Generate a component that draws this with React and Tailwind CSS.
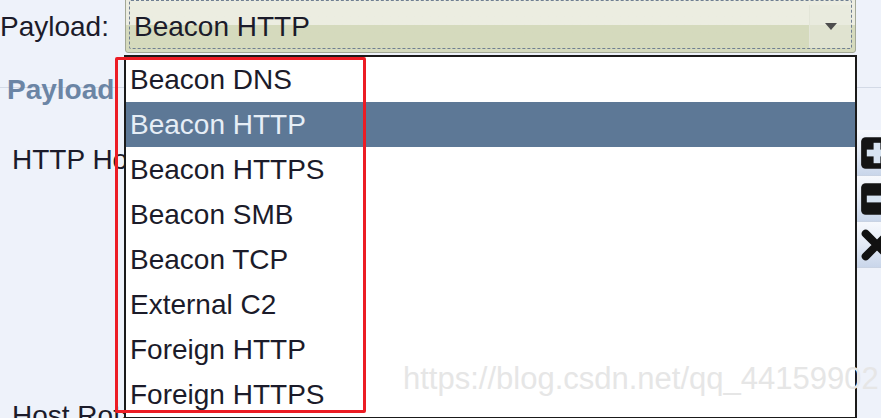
import React from "react";

const items = [
  "Beacon DNS",
  "Beacon HTTP",
  "Beacon HTTPS",
  "Beacon SMB",
  "Beacon TCP",
  "External C2",
  "Foreign HTTP",
  "Foreign HTTPS",
];

function ToolButton({ kind }) {
  return (
    <div className="flex h-[46px] shrink-0 items-center border-b border-[#c9d3e3] bg-gradient-to-b from-[#f7f9fd] via-[#e3eaf5] to-[#c9d6ea] pl-[3px]">
      <svg width="34" height="34" viewBox="0 0 30 30" className="shrink-0">
        {kind === "x" ? (
          <path d="M5 5 L25 25 M25 5 L5 25" stroke="#111" strokeWidth="7" strokeLinecap="round" />
        ) : (
          <>
            <rect x="1" y="1" width="28" height="28" rx="4" fill="#141414" />
            <rect x="6" y="12" width="18" height="6" fill="#d8e4f2" />
            {kind === "plus" && <rect x="12" y="6" width="6" height="18" fill="#d8e4f2" />}
          </>
        )}
      </svg>
    </div>
  );
}

export default function App() {
  return (
    <div
      className="relative h-[418px] w-[881px] overflow-hidden bg-[#eef2fa] text-[#1b1b2a]"
      style={{ fontFamily: '"Liberation Sans", Arial, sans-serif' }}
    >
      {/* top row */}
      <div className="flex h-[56px] items-start">
        <div className="flex h-[53px] w-[125px] items-center text-[28px] leading-none">Payload:</div>
        <div className="relative mt-[-4px] flex h-[57px] w-[731px] rounded-[3px] border border-[#a3a896] bg-gradient-to-b from-[#ecede1] from-50% to-[#d5dabd] to-50% p-[3px]">
          <div className="flex flex-1 items-center rounded-[2px] border border-dashed border-[#6f7f92] pl-[4px] pt-[4px] text-[28px] leading-none">
            Beacon HTTP
            <div className="ml-auto flex h-full w-[42px] items-center justify-center border-l border-[#e3e5d8] bg-[#e7e9dc]/60">
              <svg width="12" height="8" viewBox="0 0 12 8">
                <path d="M0 0 H12 L6 7 Z" fill="#4d4d4d" />
              </svg>
            </div>
          </div>
        </div>
      </div>

      {/* section header */}
      <div className="flex h-[32px] items-center border-b border-[#d3dae6] pl-[7px]">
        <span className="mt-[36px] text-[28px] font-bold leading-none text-[#6b85a5]">Payload</span>
      </div>

      {/* hosts row */}
      <div className="mt-[42px] flex">
        <div className="w-[125px] shrink-0 whitespace-nowrap pl-[12px] pt-[16px] text-[28px] leading-none">HTTP Hosts:</div>
        <div className="h-[260px] w-[732px] shrink-0 border border-[#333] bg-white"></div>
        <div className="flex w-[40px] shrink-0 flex-col">
          <ToolButton kind="plus" />
          <ToolButton kind="minus" />
          <ToolButton kind="x" />
        </div>
      </div>

      <div className="absolute left-[12px] top-[402px] text-[28px] leading-none">Host Rotation</div>

      {/* dropdown popup */}
      <div className="absolute left-[124px] top-[55px] w-[733px] border-2 border-[#1a1a1a] bg-white">
        {items.map((item) => (
          <div
            key={item}
            className={
              item === "Beacon HTTP"
                ? "flex h-[45px] items-center bg-[#5d7896] pl-[4px] text-[28px] leading-none text-[#e6eef6]"
                : "flex h-[45px] items-center pl-[4px] text-[28px] leading-none"
            }
          >
            {item}
          </div>
        ))}
      </div>

      {/* annotation box */}
      <div className="pointer-events-none absolute left-[115px] top-[57px] h-[356px] w-[251px] rounded-[2px] border-[3px] border-[#ec1c24]"></div>

      {/* watermark */}
      <div className="pointer-events-none absolute left-[403px] top-[363px] whitespace-nowrap text-[31px] leading-none text-[#e6e6e6]">
        https://blog.csdn.net/qq_44159902
      </div>
    </div>
  );
}
